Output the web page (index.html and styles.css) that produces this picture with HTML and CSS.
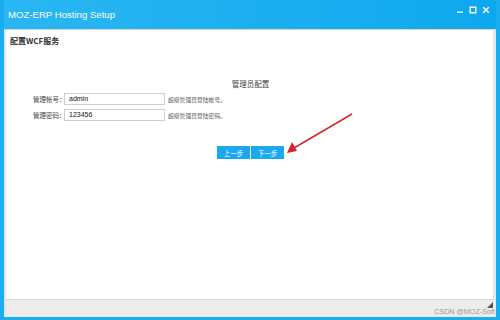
FILE: index.html
```html
<!DOCTYPE html>
<html>
<head>
<meta charset="utf-8">
<link rel="stylesheet" href="styles.css">
</head>
<body>
<div class="window">
  <div class="titlebar">
    <span class="title">MOZ-ERP Hosting Setup</span>
    <div class="controls">
      <svg width="8" height="8" viewBox="0 0 8 8"><rect x="1" y="5.5" width="6" height="1.4" fill="#fff"/></svg>
      <svg width="8" height="8" viewBox="0 0 8 8"><rect x="1.2" y="1.2" width="5.6" height="5.6" fill="none" stroke="#fff" stroke-width="1.4"/></svg>
      <svg width="8" height="8" viewBox="0 0 8 8"><path d="M1.2 1.2L6.8 6.8M6.8 1.2L1.2 6.8" stroke="#fff" stroke-width="1.4"/></svg>
    </div>
  </div>
  <div class="panel">
    <div class="heading">配置WCF服务</div>
    <div class="section-title">管理员配置</div>
    <div class="form">
      <div class="row">
        <span class="label">管理帐号：</span>
        <span class="input">admin</span>
        <span class="hint">超级管理员登陆帐号。</span>
      </div>
      <div class="row">
        <span class="label">管理密码：</span>
        <span class="input">123456</span>
        <span class="hint">超级管理员登陆密码。</span>
      </div>
    </div>
    <div class="buttons">
      <span class="btn">上一步</span>
      <span class="btn">下一步</span>
    </div>
    <svg class="arrow" width="70" height="46" viewBox="0 0 70 46">
      <line x1="67" y1="3" x2="9" y2="37" stroke="#d9232e" stroke-width="1.5"/>
      <polygon points="2,42 7,31 12,40" fill="#d9232e"/>
    </svg>
  </div>
  <div class="statusbar">
    <span class="watermark">CSDN @MOZ-Soft</span>
    <svg class="grip" width="8" height="8" viewBox="0 0 8 8"><path d="M1 7L7 1V7Z" fill="#555"/></svg>
  </div>
</div>
</body>
</html>
```
FILE: styles.css
```css
* { box-sizing: border-box; }
html, body { margin: 0; padding: 0; }
body {
  width: 500px;
  height: 320px;
  overflow: hidden;
  font-family: "Noto Sans CJK SC", "Liberation Sans", sans-serif;
  background: #1aaef0;
}
.window {
  width: 500px;
  height: 320px;
  background: #1aaef0;
  padding: 0 4px 3px 4px;
  display: flex;
  flex-direction: column;
}
.titlebar {
  height: 29px;
  display: flex;
  align-items: flex-start;
  justify-content: space-between;
  padding: 0 6px 0 4px;
  background: linear-gradient(90deg, #2ab6f2, #1aaef0 60%, #0ea8ee);
}
.title {
  color: #fff;
  font-family: "Liberation Sans", sans-serif;
  font-size: 9.6px;
  line-height: 12px;
  margin-top: 9px;
}
.controls {
  display: flex;
  gap: 5px;
  align-items: center;
  margin-top: 6px;
}
.panel {
  position: relative;
  flex: 1;
  background: #fff;
  border: 1px solid #d6d6d6;
  border-left: 2px solid #e4e4e4;
  border-right: 3px solid #e8e8e8;
  padding: 4px 0 0 2px;
}
.heading {
  font-size: 8px;
  font-weight: bold;
  color: #333;
  padding-left: 2px;
  line-height: 14px;
}
.section-title {
  text-align: center;
  font-size: 7.5px;
  color: #444;
  margin-top: 31px;
  line-height: 10px;
}
.form {
  margin-top: 4px;
  padding-left: 25px;
  display: flex;
  flex-direction: column;
  gap: 4px;
}
.row {
  display: flex;
  align-items: center;
  height: 12px;
}
.label {
  width: 31px;
  font-size: 6.5px;
  color: #444;
  white-space: nowrap;
}
.input {
  width: 101px;
  height: 12px;
  border: 1px solid #cfcfcf;
  font-family: "Liberation Sans", sans-serif;
  font-size: 7px;
  color: #111;
  line-height: 10px;
  padding-left: 4px;
}
.hint {
  margin-left: 3px;
  font-size: 5.8px;
  color: #666;
  white-space: nowrap;
}
.buttons {
  display: flex;
  justify-content: center;
  gap: 1px;
  margin-top: 25px;
}
.btn {
  width: 33px;
  height: 13px;
  background: #1aa8ee;
  color: #fff;
  font-size: 6.5px;
  display: flex;
  align-items: center;
  justify-content: center;
}
.arrow {
  position: absolute;
  left: 279px;
  top: 81px;
}
.statusbar {
  height: 17px;
  background: #ececec;
  border-left: 2px solid #e4e4e4;
  display: flex;
  align-items: center;
  justify-content: flex-end;
  position: relative;
}
.watermark {
  font-family: "Liberation Sans", sans-serif;
  font-size: 7.2px;
  color: #9a9a9a;
  margin-right: 1px;
  margin-top: 5px;
}
.grip {
  position: absolute;
  right: 2px;
  top: 1px;
}
```
